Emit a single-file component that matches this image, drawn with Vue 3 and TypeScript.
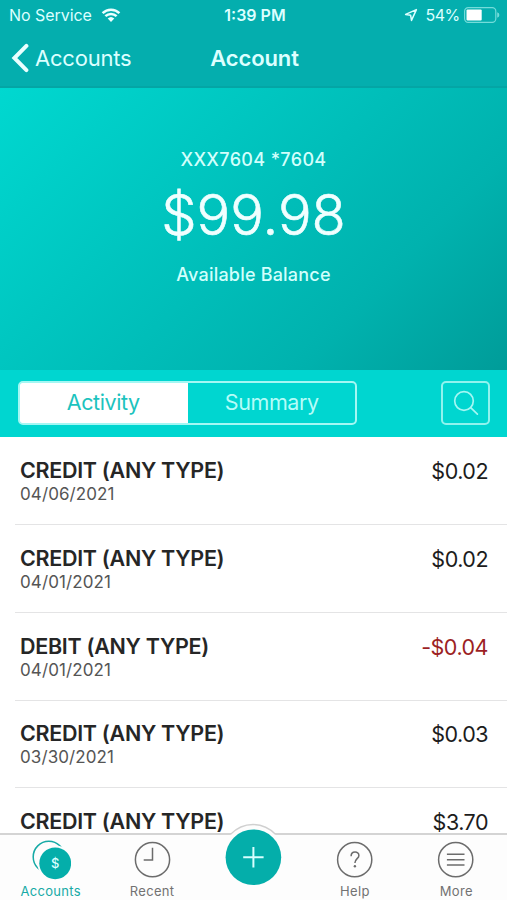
<script setup lang="ts">
import { ref } from 'vue'

interface Transaction {
  title: string
  date: string
  amount: string
  negative?: boolean
}

const transactions: Transaction[] = [
  { title: 'CREDIT (ANY TYPE)', date: '04/06/2021', amount: '$0.02' },
  { title: 'CREDIT (ANY TYPE)', date: '04/01/2021', amount: '$0.02' },
  { title: 'DEBIT (ANY TYPE)', date: '04/01/2021', amount: '-$0.04', negative: true },
  { title: 'CREDIT (ANY TYPE)', date: '03/30/2021', amount: '$0.03' },
  { title: 'CREDIT (ANY TYPE)', date: '', amount: '$3.70' },
]

type Segment = 'Activity' | 'Summary'
const segments: Segment[] = ['Activity', 'Summary']
const selected = ref<Segment>('Activity')
</script>

<template>
  <div class="screen">
    <header class="top">
      <div class="status">
        <div class="carrier">
          <span class="carrier-name">No Service</span>
          <svg class="wifi" width="20" height="15" viewBox="0 0 20 15">
            <path d="M1.6 5.2 A12 12 0 0 1 18.4 5.2" />
            <path d="M4.4 8.2 A8 8 0 0 1 15.6 8.2" />
            <path class="solid" d="M6.7 10.6 A4.8 4.8 0 0 1 13.3 10.6 L10 14 Z" />
          </svg>
        </div>
        <div class="clock">1:39 PM</div>
        <div class="power">
          <svg class="location" width="14" height="14" viewBox="0 0 14 14">
            <path d="M12.4 1.6 L1.6 6.4 L6.6 7.2 L7.5 12.4 Z" />
          </svg>
          <span class="percent">54%</span>
          <svg class="battery" width="36" height="16" viewBox="0 0 36 16">
            <rect class="shell" x="0.6" y="0.6" width="31.2" height="14.8" rx="3.6" />
            <rect class="charge" x="2.5" y="2.6" width="15.2" height="10.8" rx="1" />
            <path class="charge cap" d="M33.2 5.2 Q35.4 6 35.4 8 Q35.4 10 33.2 10.8 Z" />
          </svg>
        </div>
      </div>
      <nav class="nav">
        <a class="back">
          <svg width="18" height="30" viewBox="0 0 18 30">
            <path d="M15.4 2.9 L3.4 15 L15.4 27.1" />
          </svg>
          <span>Accounts</span>
        </a>
        <h1 class="heading">Account</h1>
      </nav>
    </header>

    <section class="balance">
      <div class="number">XXX7604 *7604</div>
      <div class="total">$99.98</div>
      <div class="caption">Available Balance</div>
    </section>

    <div class="toolbar">
      <div class="segments">
        <button
          v-for="s in segments"
          :key="s"
          class="segment"
          :class="{ active: s === selected }"
          @click="selected = s"
        >{{ s }}</button>
      </div>
      <button class="search" aria-label="Search">
        <svg width="26" height="26" viewBox="0 0 26 26">
          <circle cx="11" cy="11" r="9.3" />
          <path d="M17.7 17.7 L24.4 24.2" />
        </svg>
      </button>
    </div>

    <ul class="list">
      <li v-for="(t, i) in transactions" :key="i" class="row">
        <div class="info">
          <div class="title">{{ t.title }}</div>
          <div v-if="t.date" class="date">{{ t.date }}</div>
        </div>
        <div class="amount" :class="{ negative: t.negative }">{{ t.amount }}</div>
      </li>
    </ul>

    <footer class="tabs">
      <a class="tab current">
        <svg width="40" height="40" viewBox="0 0 40 40">
          <circle class="line" cx="17.8" cy="16.9" r="15.6" />
          <circle class="gap" cx="24.2" cy="23.3" r="17.8" />
          <circle class="coin" cx="24.2" cy="23.3" r="15.9" />
          <text class="dollar" x="24.2" y="28" text-anchor="middle">$</text>
        </svg>
        <span>Accounts</span>
      </a>
      <a class="tab">
        <svg width="40" height="40" viewBox="0 0 40 40">
          <circle class="line" cx="20.5" cy="19.7" r="17.1" />
          <path class="line" d="M20.5 7.7 V20 H11.7" />
        </svg>
        <span>Recent</span>
      </a>
      <a class="tab add">
        <svg width="64" height="66" viewBox="0 0 64 66">
          <path class="halo" d="M9.3 11.5 Q19 1.5 32 1.5 Q45 1.5 54.7 11.5 V20 H9.3 Z" />
          <path class="rim" d="M9.3 11.5 Q19 1.5 32 1.5 Q45 1.5 54.7 11.5" />
          <circle class="disc" cx="32.4" cy="34.3" r="27.8" />
          <path class="plus" d="M32.4 24 V44.5 M22.2 34.3 H42.6" />
        </svg>
      </a>
      <a class="tab">
        <svg width="40" height="40" viewBox="0 0 40 40">
          <circle class="line" cx="19.7" cy="19.7" r="17.1" />
          <path class="line" d="M16.1 16.2 C16.1 10.7 23.9 10.9 23.9 15.4 C23.9 18.7 19.9 18.7 19.9 23" />
          <circle class="dot" cx="19.9" cy="26.3" r="1.2" />
        </svg>
        <span>Help</span>
      </a>
      <a class="tab">
        <svg width="40" height="40" viewBox="0 0 40 40">
          <circle class="line" cx="19.7" cy="19.7" r="17.1" />
          <path class="line" d="M10.9 14.2 H28.5 M10.9 19.7 H28.5 M10.9 25.1 H28.5" />
        </svg>
        <span>More</span>
      </a>
    </footer>
  </div>
</template>

<style>
body {
  margin: 0;
  overflow: hidden;
}
</style>

<style scoped>
.screen {
  width: 507px;
  height: 900px;
  display: flex;
  flex-direction: column;
  overflow: hidden;
  background: #fff;
  font-family: Inter, 'Liberation Sans', sans-serif;
}
svg {
  display: block;
  flex: none;
  fill: none;
}
.top {
  flex: none;
  height: 88px;
  box-sizing: border-box;
  background: #04aeae;
  border-bottom: 2px solid #04a5a5;
  color: #dcffff;
}
.status {
  height: 30px;
  display: grid;
  grid-template-columns: 1fr auto 1fr;
  align-items: center;
  padding: 0 7px 0 9px;
  font-size: 16px;
}
.carrier,
.power {
  display: flex;
  align-items: center;
}
.carrier {
  gap: 9px;
}
.carrier-name {
  letter-spacing: -0.05px;
}
.wifi path {
  stroke: #ecffff;
  stroke-width: 2.5;
}
.wifi .solid {
  fill: #ecffff;
  stroke: none;
}
.clock {
  padding-left: 1px;
  font-weight: 600;
}
.power {
  justify-content: flex-end;
}
.location {
  margin-right: 8px;
}
.location path {
  stroke: #dcffff;
  stroke-width: 1.5;
  stroke-linejoin: round;
}
.percent {
  margin-right: 4.5px;
  letter-spacing: -0.6px;
}
.shell {
  stroke: #74dcda;
  stroke-width: 1.2;
}
.charge {
  fill: #fff;
}
.cap {
  fill: #74dcda;
}
.nav {
  height: 56px;
  display: grid;
  grid-template-columns: 1fr auto 1fr;
  align-items: center;
  padding: 0 9px 0 11px;
}
.back {
  display: flex;
  align-items: center;
  gap: 6px;
  font-size: 22px;
  letter-spacing: -0.2px;
}
.back path {
  stroke: #eaffff;
  stroke-width: 4;
  stroke-linecap: round;
  stroke-linejoin: miter;
}
.heading {
  margin: 0;
  font-size: 22px;
  font-weight: 600;
  letter-spacing: -0.1px;
}
.balance {
  flex: none;
  height: 282px;
  display: flex;
  flex-direction: column;
  align-items: center;
  box-sizing: border-box;
  padding-top: 60px;
  background: linear-gradient(135deg, #00d8d0 0%, #00beb9 50%, #00b2ae 73%, #009c99 100%);
  color: #d2fffc;
}
.number,
.caption {
  font-size: 18px;
  line-height: 24px;
  font-weight: 500;
  letter-spacing: 0.2px;
}
.number {
  letter-spacing: 0.35px;
}
.total {
  margin: 8px 0 13px;
  font-size: 56px;
  line-height: 70px;
  font-weight: 300;
  -webkit-text-stroke: 0.6px #f0ffff;
  color: #f0ffff;
}
.toolbar {
  flex: none;
  height: 67px;
  display: flex;
  justify-content: space-between;
  align-items: center;
  box-sizing: border-box;
  padding: 0 17px 2px 18px;
  background: #00d6d0;
}
.segments {
  width: 339px;
  height: 44px;
  display: flex;
  box-sizing: border-box;
  border: 2px solid #a4f7f3;
  border-radius: 5px;
  overflow: hidden;
}
.segment {
  flex: 1;
  border: 0;
  padding: 0 0 1px 2px;
  background: none;
  font: 21.5px Inter, sans-serif;
  letter-spacing: -0.4px;
  color: #b5fcf8;
}
.segment.active {
  padding-left: 0;
  background: #fff;
  box-shadow: 0 0 0 1px #fff;
  color: #1cc3be;
}
.search {
  width: 49px;
  height: 44px;
  display: flex;
  align-items: center;
  justify-content: center;
  padding: 0;
  border: 2px solid #8ff3ee;
  border-radius: 5px;
  background: none;
}
.search svg {
  stroke: #a4f7f3;
  stroke-width: 1.7;
  stroke-linecap: round;
}
.list {
  flex: 1;
  min-height: 0;
  margin: 0;
  padding: 0.6px 0 0 15px;
  list-style: none;
  overflow: hidden;
}
.row {
  height: 87.7px;
  display: flex;
  justify-content: space-between;
  box-sizing: border-box;
  padding: 19.6px 19px 0 5px;
  border-bottom: 1px solid #e4e4e5;
}
.row:last-child {
  height: 75px;
  border-bottom: 0;
}
.title {
  font-size: 21.5px;
  line-height: 27px;
  font-weight: 600;
  letter-spacing: -0.3px;
  color: #262626;
}
.date {
  font-size: 17px;
  line-height: 21px;
  letter-spacing: 0.1px;
  color: #555;
}
.amount {
  font-size: 21.5px;
  line-height: 28px;
  letter-spacing: -0.5px;
  color: #1c1c1c;
}
.amount.negative {
  color: #9c1f24;
}
.tabs {
  flex: none;
  height: 67px;
  display: grid;
  grid-template-columns: repeat(5, 1fr);
  box-sizing: border-box;
  border-top: 2px solid #d4d4d4;
  background: #fdfdfd;
}
.tab {
  display: flex;
  flex-direction: column;
  align-items: center;
  gap: 1.5px;
  padding-top: 5px;
  font-size: 13px;
  line-height: 18px;
  letter-spacing: 0.3px;
  color: #727272;
}
.tab.current {
  color: #16aaa6;
}
.line {
  stroke: #6c6c6c;
  stroke-width: 1.5;
}
.current .line {
  stroke: #16aaa6;
}
.dot {
  fill: #6c6c6c;
}
.gap {
  fill: #fdfdfd;
}
.coin,
.disc {
  fill: #04aeaa;
}
.dollar {
  fill: #d8ffff;
  font-size: 13px;
  font-weight: 500;
  letter-spacing: 0;
}
.add {
  padding: 0;
}
.add svg {
  margin-top: -12px;
}
.halo {
  fill: #fdfdfd;
}
.rim {
  stroke: #d0d0d0;
  stroke-width: 1.3;
}
.plus {
  stroke: #d8ffff;
  stroke-width: 2;
}
</style>
